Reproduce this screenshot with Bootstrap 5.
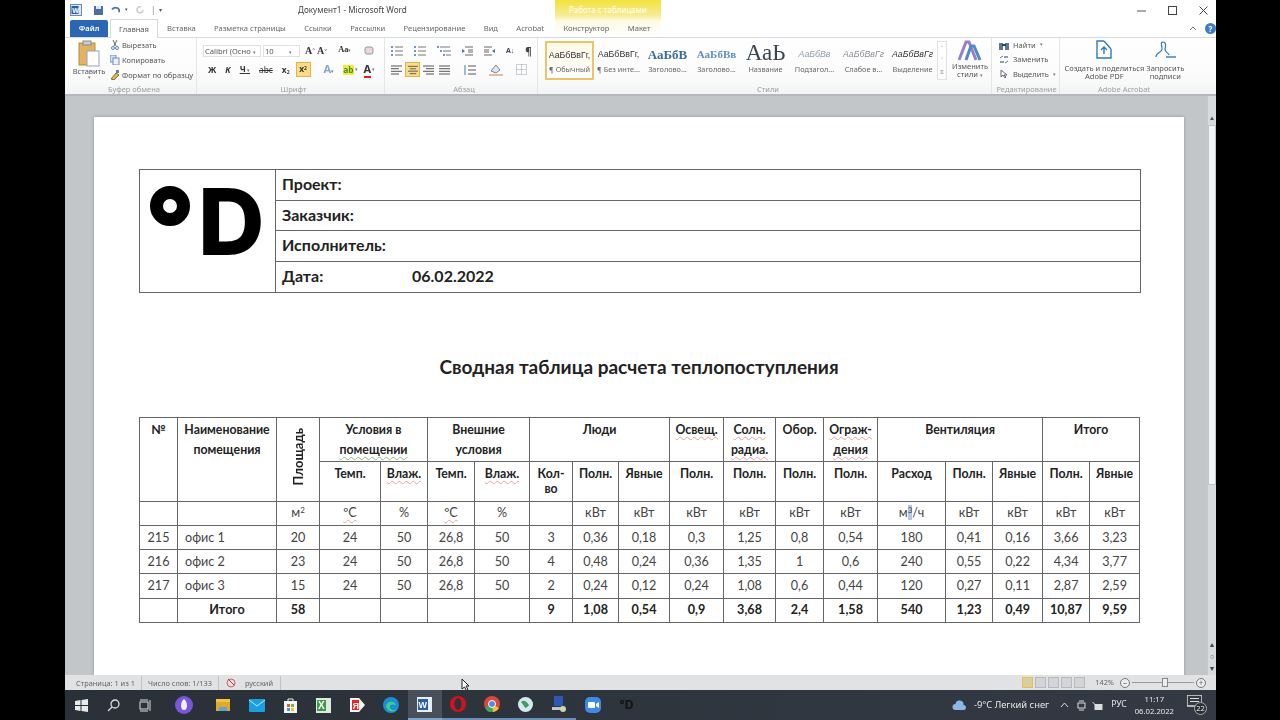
<!DOCTYPE html>
<html lang="ru"><head><meta charset="utf-8"><title>Документ1 - Microsoft Word</title>
<link href="https://cdn.jsdelivr.net/npm/bootstrap@5.3.0/dist/css/bootstrap.min.css" rel="stylesheet">
<style>
html,body{height:720px;overflow:hidden;background:#000;}
body{font-family:"Noto Sans","Liberation Sans",sans-serif;}
.win{margin-left:65px;width:1151px;height:720px;background:#fff;color:#555;font-size:8px;line-height:1.1;}
.ttl{height:20px;padding:0 5px;}
.ttl-left{width:228px;gap:4px;}
.ttl-name{font-size:8.15px;color:#444;}
.ctx{position:absolute;left:490px;top:0;width:106px;height:37px;background:linear-gradient(#f2e23e 0,#f6eb8e 40%,#fdfbe6 58%,#fff 100%);text-align:center;color:#fff;font-size:8px;padding-top:6px;}
.tabs{height:18px;padding-left:5px;font-size:7.6px;color:#666;border-bottom:1px solid #d6d9dd;}
.tb{padding:0 9.2px;line-height:17px;}
.tb-file{background:#2a66b4;color:#fff;width:38px;padding:0;text-align:center;font-weight:600;height:17px;border-radius:2px 2px 0 0;}
.tb-on{background:#fff;border:1px solid #d6d9dd;border-bottom:0;margin-top:-1px;height:19px;line-height:18px;color:#555;width:48px;text-align:center;padding:0;margin-left:2px;}
.rib{height:58px;background:linear-gradient(#fff,#fbfbfb 70%,#f2f3f4);border-bottom:2px solid #b4b7bb;font-size:7.5px;}
.grp{border-right:1px solid #e4e5e7;height:100%;padding-top:2px;flex:none;}
.grp-body{height:44px;}
.grp-lab{height:11px;line-height:11px;text-align:center;color:#9a9da1;font-size:7.5px;}
.g1{width:132px;padding-left:7px}.g2{width:188px;padding-left:6px}.g3{width:153px;padding-left:6px}.g4{width:454px;padding-left:7px}.g5{width:68px;padding-left:7px}.g6{width:125px;padding-left:3px;border-right:0}
.big{width:34px;text-align:center;white-space:nowrap;}
.clip-gap{gap:2px;white-space:nowrap;}
.col3{margin-top:-2px;height:44px;}
.rw2{padding-top:3px;}
.selbx{height:12px;border:1px solid #dfe1e4;background:#fff;line-height:10px;padding-left:1px;color:#555;font-size:7.6px;white-space:nowrap;}
.rw{height:15px;gap:5px;}
.ic{font-weight:700;color:#333;font-size:8.4px;line-height:14px;}
.ar{font-size:5px;color:#777;font-weight:400;}
.hl{background:#fbdc86;border:1px solid #e3b34c;width:15px;height:15px;text-align:center;line-height:12px;}
.sty{width:49px;height:39px;text-align:center;overflow:hidden;white-space:nowrap;color:#666;font-size:7.3px;margin-top:1px;}
.sty-on{border:2px solid #eec468;background:linear-gradient(#fff9e6,#fff);}
.smp{height:24px;line-height:27px;color:#333;font-size:8.8px;font-family:"Liberation Sans",sans-serif;}
.sty-on .smp{height:22px;line-height:25px;}
.scr{width:10px;height:39px;border:1px solid #dfe1e4;font-size:6px;text-align:center;line-height:12px;color:#777;margin-top:1px;}
.doc{height:579px;background:#c3c6c9;overflow:hidden;position:relative;padding:21px 32px 0 29px;}
.vsb{position:absolute;right:0;top:0;bottom:0;width:9px;background:#d8dadd;border-left:1px solid #c4c7cb;color:#444;font-size:6px;text-align:center;}
.vup{margin-top:19px;}
.thumb{height:360px;background:#f3f4f5;margin-top:3px;border:1px solid #c2c5c9;}
.vnav{position:absolute;left:0;right:0;bottom:0;line-height:12px;color:#444;font-size:7px;}
.pg{width:1090px;height:600px;background:#fff;padding:52px 44px 0 45px;box-shadow:0 0 3px #8b9098;color:#222;font-family:"Lato","Noto Sans",sans-serif;}
.hd,.tbl{border-collapse:collapse;table-layout:fixed;}
.hd{width:1002px;font-size:16px;font-weight:700;color:#222;}
.hd td{border:1px solid #666;height:30.7px;padding:0 6px 2px;}
.hd .lg{width:136px;padding:0;position:relative;}
.ring{position:absolute;left:10px;top:16px;width:40px;height:40px;border:13px solid #000;border-radius:50%;}
.dd{position:absolute;left:58px;top:6px;font:800 92px/92px Inter,sans-serif;color:#000;}
.tt{text-align:center;font-weight:700;font-size:19px;color:#222;height:30px;line-height:30px;margin:59px 0 35px;width:1000px;}
.tbl{width:1001px;font-size:12.6px;color:#444;text-align:center;}
.tbl td{border:1px solid #666;padding:0;height:24.2px;line-height:20px;vertical-align:middle;}
.tbl .h td{font-weight:700;color:#222;font-size:12.3px;vertical-align:top;padding-top:2px;}
.tbl .r1 td{height:44px}
.tbl .r2 td{height:40px;line-height:15px;padding-top:4px;}
.tbl .tot td{font-weight:700;color:#222;}
.tbl td.lf{text-align:left;padding-left:7px;}
.vert{writing-mode:vertical-rl;transform:rotate(180deg);display:inline-block;margin:0 auto;font-size:13px;}
.tbl .h td.vc{vertical-align:middle;padding:0;}
.rd{text-decoration:underline wavy #e2a39c 1px;text-underline-offset:2px;}
.gr{text-decoration:underline wavy #8fb887 1px;text-underline-offset:2px;}
.sel{background:#b4c9e4;}
.sup{font-size:8px;vertical-align:4px;line-height:0;}
.stat{height:15px;background:#e1e2e4;font-size:7.4px;color:#666;padding-left:5px;}
.st-i{padding:0 6px;border-right:1px solid #bfc2c6;line-height:14px;height:14px;}
.zm{width:11px;height:11px;background:#d2d4d7;border:1px solid #b7babd;}
.zm-on{background:#d8cfa0;border-color:#e9c14a;}
.slid{width:62px;height:1px;background:#999;position:relative;}
.knob{position:absolute;left:30px;top:-4px;width:6px;height:9px;background:#eceef0;border:1px solid #888;}
.rnd{width:10px;height:10px;border:1px solid #777;border-radius:50%;background:#eee;text-align:center;line-height:7px;font-size:8px;}
.task{height:30px;background:linear-gradient(90deg,#2a3038,#333a43);color:#e6e8ea;font-size:9.4px;}
.tkb{width:33.6px;height:30px;flex:none;}
.tkb-on{background:#4a5059;border-bottom:2px solid #7ea4cc;}
.under{border-bottom:2px solid #6c8fb5;}
.tm{font-size:7.7px;text-align:center;line-height:12px;margin-right:13px;}
.mouse{position:absolute;left:396px;top:678px;z-index:5;}
.tl{font-family:"Liberation Sans",sans-serif;font-weight:700;}
.rib,.tabs,.ttl,.stat,.task{filter:blur(.35px);}
</style></head><body>
<div class="win d-flex flex-column position-relative">
 <div class="ttl d-flex align-items-center">
  <div class="ttl-left d-flex align-items-center">
   <svg width="12" height="12" viewBox="0 0 12 12"><rect x=".5" y=".5" width="11" height="11" fill="#dce8f6" stroke="#6a8cb8"/><rect x="1.500" y="2" width="7" height="8" fill="#2b5fa8"/><text class="tl" x="2.200" y="8.700" font-size="7" fill="#fff">W</text></svg>
   <svg class="ms-2" width="9" height="9" viewBox="0 0 9 9"><rect width="9" height="9" fill="#4a6ea5"/><rect x="2" y="0" width="5" height="3" fill="#dfe7f2"/></svg>
   <svg class="ms-1" width="10" height="8" viewBox="0 0 11 9"><path d="M1 4c2-3 6-3 8 0v3" fill="none" stroke="#5078ad" stroke-width="2"/></svg>
   <span style="font-size:5px">▾</span>
   <svg class="ms-1" width="9" height="9" viewBox="0 0 9 9"><path d="M7 4a3 3 0 1 1-2-3" fill="none" stroke="#c5cad2" stroke-width="1.500"/></svg>
   <span style="color:#888;margin-left:2px">|</span><span style="font-size:6px">▾</span>
  </div>
  <span class="ttl-name">Документ1 - Microsoft Word</span>
  <div class="ms-auto d-flex align-items-center" style="gap:22px;padding-right:3px">
   <svg width="9" height="9" viewBox="0 0 9 9"><path d="M0 5h9" stroke="#555"/></svg>
   <svg width="9" height="9" viewBox="0 0 9 9"><rect x=".5" y=".5" width="8" height="8" fill="none" stroke="#444"/></svg>
   <svg width="9" height="9" viewBox="0 0 9 9"><path d="M.5.500l8 8M8.500.500l-8 8" stroke="#444"/></svg>
  </div>
 </div>
 <div class="ctx">Работа с таблицами</div>
 <div class="tabs d-flex position-relative">
  <div class="tb tb-file">Файл</div><div class="tb tb-on">Главная</div>
  <div class="tb" style="padding:0 9px">Вставка</div><div class="tb">Разметка страницы</div><div class="tb">Ссылки</div><div class="tb">Рассылки</div><div class="tb">Рецензирование</div><div class="tb">Вид</div><div class="tb">Acrobat</div>
  <div class="tb" style="margin-left:1px">Конструктор</div><div class="tb">Макет</div>
  <div class="ms-auto d-flex align-items-center gap-2">
   <svg width="8" height="7" viewBox="0 0 8 7"><path d="M1 5l3-3 3 3" fill="none" stroke="#777"/></svg>
   <span class="d-inline-block text-center text-white rounded-circle" style="width:11px;height:11px;background:#3f7cc7;line-height:11px;font-size:8px;font-weight:700">?</span>
  </div>
 </div>
 <div class="rib d-flex">
  <div class="grp g1">
   <div class="grp-body d-flex gap-1">
    <div class="big"><svg width="22" height="27" viewBox="0 0 22 27"><rect x="1" y="3" width="16" height="22" fill="#e1b463" stroke="#b68a3e"/><rect x="5" y="1" width="8" height="4" fill="#c9ced6" stroke="#888"/><rect x="9" y="11" width="12" height="15" fill="#fff" stroke="#9aa4b0"/></svg><div>Вставить</div><div class="ar">▾</div></div>
    <div class="d-flex flex-column justify-content-around col3">
     <div class="d-flex align-items-center clip-gap"><svg width="10" height="10" viewBox="0 0 10 10"><path d="M3 0l3 6M7 0L4 6" stroke="#667"/><circle cx="3" cy="8" r="1.500" fill="none" stroke="#5c7fb0"/><circle cx="7" cy="8" r="1.500" fill="none" stroke="#5c7fb0"/></svg>Вырезать</div>
     <div class="d-flex align-items-center clip-gap"><svg width="10" height="10" viewBox="0 0 10 10"><rect x="0" y="0" width="6" height="7" fill="#cfe0f2" stroke="#6b8fba"/><rect x="3" y="3" width="6" height="7" fill="#e9f1f9" stroke="#6b8fba"/></svg>Копировать</div>
     <div class="d-flex align-items-center clip-gap"><svg width="10" height="10" viewBox="0 0 10 10"><path d="M1 9l5-6 3 2-5 5z" fill="#e4b64e" stroke="#8a6a2a"/><rect x="6" y="0" width="3" height="3" fill="#6a7f99"/></svg>Формат по образцу</div>
    </div>
   </div>
   <div class="grp-lab">Буфер обмена</div>
  </div>
  <div class="grp g2">
   <div class="grp-body rw2">
    <div class="d-flex rw align-items-center"><div class="selbx" style="width:58px">Calibri (Осно <span class="ar">▾</span></div><div class="selbx" style="width:37px;margin-left:-3px">10 &nbsp; &nbsp; &nbsp; &nbsp;<span class="ar">▾</span></div><span class="ic" style="font-family:'Liberation Serif',serif;font-size:10px">A<sup style="font-size:5px">^</sup> A<sup style="font-size:5px">˅</sup></span><span class="ic" style="font-family:'Liberation Serif',serif;margin-left:6px">Aa<span class="ar">▾</span></span><svg class="ms-2" width="11" height="11" viewBox="0 0 11 11"><rect x="1" y="2" width="8" height="7" rx="2" fill="#f0d6da" stroke="#8a9bb0"/></svg></div>
    <div class="d-flex rw align-items-center mt-1" style="gap:9px;padding-left:5px"><span class="ic">Ж</span><span class="ic fst-italic">К</span><span class="ic text-decoration-underline">Ч<span class="ar"> ▾</span></span><span class="ic" style="text-decoration:line-through;font-weight:400">abc</span><span class="ic">x<sub style="font-size:5px">2</sub></span><span class="ic hl" style="margin-left:-3px">x<sup style="font-size:5px">2</sup></span><span class="ic ms-1" style="color:#7fa8d8;font-size:11px">A<span class="ar">▾</span></span><span class="ic" style="background:#f3ea3a;color:#4a8b3c;line-height:10px">ab</span><span class="ar" style="margin-left:-8px">▾</span><span class="ic" style="color:#333;font-size:11px;border-bottom:2px solid #d22;margin-left:-3px">A</span><span class="ar" style="margin-left:-8px">▾</span></div>
   </div>
   <div class="grp-lab">Шрифт</div>
  </div>
  <div class="grp g3">
   <div class="grp-body rw2">
    <div class="d-flex rw align-items-center" style="gap:11px">
     <svg width="12" height="10" viewBox="0 0 12 10"><path d="M4 1h8M4 5h8M4 9h8" stroke="#777"/><path d="M0 1h2M0 5h2M0 9h2" stroke="#3f74b5" stroke-width="1.500"/></svg>
     <svg width="12" height="10" viewBox="0 0 12 10"><path d="M4 1h8M4 5h8M4 9h8" stroke="#777"/><path d="M1 0v2M1 4v2M1 8v2" stroke="#3f74b5" stroke-width="1.500"/></svg>
     <svg width="14" height="10" viewBox="0 0 14 10"><path d="M3 1h10M6 5h8M9 9h5" stroke="#777"/><path d="M0 1h2M3 5h2M6 9h2" stroke="#3f74b5" stroke-width="1.500"/></svg>
     <svg width="11" height="10" viewBox="0 0 11 10"><path d="M3 1h8M6 4h5M6 6h5M3 9h8" stroke="#666"/><path d="M3 5L0 3v4z" fill="#3f74b5"/></svg>
     <svg width="11" height="10" viewBox="0 0 11 10"><path d="M0 1h8M0 4h5M0 6h5M0 9h8" stroke="#666"/><path d="M8 5l3-2v4z" fill="#3f74b5"/></svg>
     <span class="ic" style="font-size:7px;color:#446">А↓</span><span class="ic" style="font-size:10px;color:#444">¶</span>
    </div>
    <div class="d-flex rw align-items-center mt-1" style="gap:5px">
     <svg width="11" height="10" viewBox="0 0 11 10"><path d="M0 1h11M0 3.700h8M0 6.300h11M0 9h8" stroke="#555"/></svg>
     <span class="hl d-flex align-items-center justify-content-center" style="margin:0 -2px"><svg width="10" height="10" viewBox="0 0 11 10"><path d="M0 1h11M2 3.700h7M0 6.300h11M2 9h7" stroke="#555"/></svg></span>
     <svg width="11" height="10" viewBox="0 0 11 10"><path d="M0 1h11M3 3.700h8M0 6.300h11M3 9h8" stroke="#555"/></svg>
     <svg width="11" height="10" viewBox="0 0 11 10"><path d="M0 1h11M0 3.700h11M0 6.300h11M0 9h11" stroke="#555"/></svg>
     <svg class="ms-2" width="13" height="10" viewBox="0 0 13 10"><path d="M5 1h8M5 5h8M5 9h8" stroke="#555"/><path d="M2 0v10" stroke="#3f74b5"/></svg>
     <svg class="ms-2" width="14" height="12" viewBox="0 0 14 12"><path d="M2 7l5-6 4 5-4 3z" fill="#dfe6ee" stroke="#7789a0"/><rect y="10" width="14" height="2" fill="#e7b9a0"/></svg>
     <svg class="ms-2" width="11" height="11" viewBox="0 0 11 11"><path d="M.5.500h10v10H.5zM5.500.500v10M.5 5.500h10" fill="none" stroke="#9aa3ad" stroke-dasharray="1 1"/></svg>
    </div>
   </div>
   <div class="grp-lab">Абзац</div>
  </div>
  <div class="grp g4">
   <div class="grp-body d-flex align-items-start">
    <div class="sty sty-on"><div class="smp">АаБбВвГг,</div>¶ Обычный</div>
    <div class="sty"><div class="smp">АаБбВвГг,</div>¶ Без инте...</div>
    <div class="sty"><div class="smp" style="font:700 13px/27px 'Liberation Serif',serif;color:#3d6a9c">АаБбВ</div>Заголово...</div>
    <div class="sty"><div class="smp" style="font:700 11px/27px 'Liberation Serif',serif;color:#5f8fbd">АаБбВв</div>Заголово...</div>
    <div class="sty"><div class="smp" style="font:23px/24px 'Liberation Serif',serif;color:#3a4654">АаЬ</div>Название</div>
    <div class="sty"><div class="smp" style="font-style:italic;color:#8e9cab">АаБбВв</div>Подзагол...</div>
    <div class="sty"><div class="smp" style="font-style:italic;color:#8a8f96">АаБбВвГг</div>Слабое в...</div>
    <div class="sty"><div class="smp" style="font-style:italic">АаБбВвГг</div>Выделение</div>
    <div class="scr">˄<br>˅<br>≡</div>
    <div class="text-center ms-1" style="width:38px"><svg width="24" height="22" viewBox="0 0 24 22"><path d="M1 20L8 2h3l7 18" fill="none" stroke="#9a7ec9" stroke-width="3"/><path d="M8 20L13 6h3l6 14" fill="none" stroke="#4d8bc4" stroke-width="3"/></svg><div>Изменить</div><div>стили <span class="ar">▾</span></div></div>
   </div>
   <div class="grp-lab">Стили</div>
  </div>
  <div class="grp g5">
   <div class="grp-body d-flex flex-column justify-content-around col3">
    <div class="d-flex align-items-center gap-1"><svg width="10" height="9" viewBox="0 0 10 9"><rect y="2" width="4" height="7" fill="#5e7898"/><rect x="6" y="2" width="4" height="7" fill="#5e7898"/><rect x="3" y="3" width="4" height="2" fill="#345"/></svg>Найти <span class="ar">▾</span></div>
    <div class="d-flex align-items-center gap-1"><svg width="10" height="9" viewBox="0 0 10 9"><path d="M1 3l3-2M9 6L6 8" stroke="#66788c"/><rect x="5" y="1" width="4" height="2" fill="#8a9db3"/><rect x="1" y="6" width="4" height="2" fill="#8a9db3"/></svg>Заменить</div>
    <div class="d-flex align-items-center gap-1"><svg width="10" height="10" viewBox="0 0 10 10"><path d="M2 1v7l2-2 2 3 1-1-2-2h3z" fill="#fff" stroke="#667"/></svg>Выделить <span class="ar">▾</span></div>
   </div>
   <div class="grp-lab" style="margin-left:-5px;margin-top:2px;white-space:nowrap">Редактирование</div>
  </div>
  <div class="grp g6">
   <div class="grp-body d-flex">
    <div class="text-center" style="width:84px"><svg width="18" height="20" viewBox="0 0 18 20"><path d="M9 1H2v17h14V9M9 1l7 8M9 14V7M6 10l3-3 3 3" fill="none" stroke="#2f7ab8" stroke-width="1.400"/></svg><div style="margin-top:4px;white-space:nowrap">Создать и поделиться</div><div>Adobe PDF</div></div>
    <div class="text-center" style="width:40px"><svg width="24" height="20" viewBox="0 0 24 20"><path d="M3 17c0-5 6-4 6-8s-2-7 1-7 3 4 2 7c0 4 3 3 4 6" fill="none" stroke="#2f7ab8" stroke-width="1.200"/><path d="M13 17h10" stroke="#2f7ab8" stroke-width="1.400"/></svg><div style="margin-top:4px;white-space:nowrap">Запросить</div><div>подписи</div></div>
   </div>
   <div class="grp-lab">Adobe Acrobat</div>
  </div>
 </div>
 <div class="doc">
  <div class="pg">
   <table class="hd">
    <tr><td class="lg" rowspan="4"><span class="ring"></span><span class="dd">D</span></td><td>Проект:</td></tr>
    <tr><td>Заказчик:</td></tr>
    <tr><td>Исполнитель:</td></tr>
    <tr><td><span class="d-inline-block" style="width:130px">Дата:</span>06.02.2022</td></tr>
   </table>
   <div class="tt">Сводная таблица расчета теплопоступления</div>
   <table class="tbl">
    <colgroup><col style="width:38px"><col style="width:99px"><col style="width:43px"><col style="width:61px"><col style="width:47px"><col style="width:47px"><col style="width:55px"><col style="width:43px"><col style="width:46px"><col style="width:51px"><col style="width:54px"><col style="width:52px"><col style="width:48px"><col style="width:54px"><col style="width:68px"><col style="width:47px"><col style="width:50px"><col style="width:47px"><col style="width:50px"></colgroup>
    <tr class="h r1"><td rowspan="2">№</td><td rowspan="2">Наименование помещения</td><td rowspan="2" class="vc"><span class="vert">Площадь</span></td><td colspan="2">Условия в <span class="gr">помещении</span></td><td colspan="2">Внешние<br>условия</td><td colspan="3">Люди</td><td><span class="rd">Освещ.</span></td><td><span class="rd">Солн.</span> <span class="rd">радиа.</span></td><td>Обор.</td><td><span class="rd">Ограж-дения</span></td><td colspan="3">Вентиляция</td><td colspan="2">Итого</td></tr>
    <tr class="h r2"><td>Темп.</td><td><span class="rd">Влаж.</span></td><td>Темп.</td><td><span class="rd">Влаж.</span></td><td>Кол-<br>во</td><td>Полн.</td><td>Явные</td><td>Полн.</td><td>Полн.</td><td>Полн.</td><td>Полн.</td><td>Расход</td><td>Полн.</td><td>Явные</td><td>Полн.</td><td>Явные</td></tr>
    <tr><td></td><td></td><td>м<span class="sup">2</span></td><td><span class="rd">ºС</span></td><td>%</td><td><span class="rd">ºС</span></td><td>%</td><td></td><td>кВт</td><td>кВт</td><td>кВт</td><td>кВт</td><td>кВт</td><td>кВт</td><td>м<span class="sel"><span class="sup">3</span></span>/ч</td><td>кВт</td><td>кВт</td><td>кВт</td><td>кВт</td></tr>
    <tr><td>215</td><td class="lf">офис 1</td><td>20</td><td>24</td><td>50</td><td>26,8</td><td>50</td><td>3</td><td>0,36</td><td>0,18</td><td>0,3</td><td>1,25</td><td>0,8</td><td>0,54</td><td>180</td><td>0,41</td><td>0,16</td><td>3,66</td><td>3,23</td></tr>
    <tr><td>216</td><td class="lf">офис 2</td><td>23</td><td>24</td><td>50</td><td>26,8</td><td>50</td><td>4</td><td>0,48</td><td>0,24</td><td>0,36</td><td>1,35</td><td>1</td><td>0,6</td><td>240</td><td>0,55</td><td>0,22</td><td>4,34</td><td>3,77</td></tr>
    <tr><td>217</td><td class="lf">офис 3</td><td>15</td><td>24</td><td>50</td><td>26,8</td><td>50</td><td>2</td><td>0,24</td><td>0,12</td><td>0,24</td><td>1,08</td><td>0,6</td><td>0,44</td><td>120</td><td>0,27</td><td>0,11</td><td>2,87</td><td>2,59</td></tr>
    <tr class="tot"><td></td><td>Итого</td><td>58</td><td></td><td></td><td></td><td></td><td>9</td><td>1,08</td><td>0,54</td><td>0,9</td><td>3,68</td><td>2,4</td><td>1,58</td><td>540</td><td>1,23</td><td>0,49</td><td>10,87</td><td>9,59</td></tr>
   </table>
  </div>
  <div class="vsb"><div class="vup">▲</div><div class="thumb"></div><div class="vnav">▲<br>○<br>▼</div></div>
 </div>
 <div class="stat d-flex align-items-center">
  <div class="st-i">Страница: 1 из 1</div><div class="st-i">Число слов: 1/133</div>
  <div class="st-i d-flex align-items-center gap-2" style="padding-right:7px"><svg width="12" height="11" viewBox="0 0 12 11"><circle cx="6" cy="6" r="4" fill="none" stroke="#c66"/><path d="M3 2l6 6" stroke="#c33"/></svg>русский</div>
  <div class="ms-auto d-flex align-items-center" style="gap:2px;padding-right:10px">
   <span class="zm zm-on"></span><span class="zm"></span><span class="zm"></span><span class="zm"></span><span class="zm"></span>
   <span class="ms-2 me-1">142%</span><span class="rnd">–</span><span class="slid"><span class="knob"></span></span><span class="rnd">+</span>
  </div>
 </div>
 <div class="task d-flex align-items-center">
  <div class="tkb d-flex align-items-center justify-content-center"><svg width="13" height="13" viewBox="0 0 13 13"><path d="M0 2l5.500-1v5H0zM6.500 1L13 0v6H6.500zM0 7h5.500v5L0 11zM6.500 7H13v6l-6.500-1z" fill="#e8eaec"/></svg></div>
  <div class="tkb d-flex align-items-center justify-content-center" style="margin-left:-2px"><svg width="13" height="13" viewBox="0 0 13 13"><circle cx="8" cy="5" r="4" fill="none" stroke="#ddd" stroke-width="1.300"/><path d="M5 8l-4 4" stroke="#ddd" stroke-width="1.300"/></svg></div>
  <div class="tkb d-flex align-items-center justify-content-center" style="margin-left:-1px"><svg width="13" height="13" viewBox="0 0 13 13"><rect x="1" y="3" width="8" height="7" fill="none" stroke="#ddd"/><path d="M1 1h8M1 12h8M11 1v11" stroke="#ddd"/></svg></div>
  <div class="tkb d-flex align-items-center justify-content-center ms-1"><svg width="18" height="18"><circle cx="9" cy="9" r="9" fill="#7a57d8"/><path d="M9 3c4 3 4 11 0 11s-4-8 0-11z" fill="#f2eefb"/></svg></div>
  <div class="tkb d-flex align-items-center justify-content-center" style="margin-left:6px"><svg width="14" height="14"><rect width="14" height="4" y="1" fill="#f3c53e"/><rect width="14" height="9" y="4" fill="#e0a92e"/><rect x="3" y="9" width="8" height="4" fill="#5aa7d6"/></svg></div>
  <div class="tkb d-flex align-items-center justify-content-center"><svg width="16" height="13"><rect width="16" height="13" rx="1" fill="#1c9fe0"/><path d="M0 1l8 6 8-6" fill="none" stroke="#bfe8fa"/></svg></div>
  <div class="tkb d-flex align-items-center justify-content-center"><svg width="13" height="15"><rect y="3" width="13" height="12" fill="#f4f4f4"/><rect x="3" y="6" width="3" height="3" fill="#e25a3a"/><rect x="7" y="6" width="3" height="3" fill="#7fb43a"/><rect x="3" y="10" width="3" height="3" fill="#3a9ad9"/><rect x="7" y="10" width="3" height="3" fill="#f2c12e"/><path d="M4 3V1h5v2" fill="none" stroke="#eee"/></svg></div>
  <div class="tkb d-flex align-items-center justify-content-center"><svg width="15" height="15"><rect width="15" height="15" fill="#dfe9dd"/><rect x="1" y="2" width="9" height="11" fill="#3d9b4a"/><text class="tl" x="2" y="11" font-size="10" fill="#fff">X</text></svg></div>
  <div class="tkb d-flex align-items-center justify-content-center"><svg width="15" height="16"><path d="M0 1h9l6 7-6 7H0z" fill="#f4f4f4"/><rect x="2" y="3" width="7" height="10" fill="#e22"/><text class="tl" x="2.500" y="11.500" font-size="9" fill="#fff">Я</text></svg></div>
  <div class="tkb d-flex align-items-center justify-content-center"><svg width="16" height="16"><circle cx="8" cy="8" r="8" fill="#1b8fd6"/><path d="M3 9c1-5 8-6 10-1-3-1-7-1-6 3 1 2 4 3 7 1-3 4-10 3-11-3z" fill="#3fd08f"/></svg></div>
  <div class="tkb tkb-on d-flex align-items-center justify-content-center"><svg width="15" height="15"><rect width="15" height="15" fill="#e8eef6"/><rect x="1" y="2" width="10" height="11" fill="#2b5fa8"/><text class="tl" x="1.500" y="11" font-size="9" fill="#fff">W</text></svg></div>
  <div class="tkb under d-flex align-items-center justify-content-center"><svg width="16" height="16"><ellipse cx="8" cy="8" rx="8" ry="8" fill="#d3121c"/><ellipse cx="8" cy="8" rx="3.500" ry="6" fill="#2d333b"/></svg></div>
  <div class="tkb under d-flex align-items-center justify-content-center"><svg width="16" height="16"><circle cx="8" cy="8" r="8" fill="#e0453a"/><path d="M8 8L1 12a8 8 0 0 0 9 4z" fill="#3aa757"/><path d="M8 8l7 4a8 8 0 0 1-6 4z" fill="#f5c02e"/><circle cx="8" cy="8" r="3.500" fill="#4a8ce8" stroke="#fff"/></svg></div>
  <div class="tkb under d-flex align-items-center justify-content-center"><svg width="15" height="15"><circle cx="7.500" cy="7.500" r="7.500" fill="#d8e9ee"/><path d="M3 5c3-3 6 0 8 3-2 3-4 4-5 1z" fill="#3f9e62"/></svg></div>
  <div class="tkb under d-flex align-items-center justify-content-center"><svg width="15" height="17"><rect x="2" width="9" height="10" fill="#2d58b8"/><rect x="0" y="11" width="10" height="3" fill="#bfc6d0"/><circle cx="11" cy="13" r="3" fill="#cfd6a8"/></svg></div>
  <div class="tkb d-flex align-items-center justify-content-center"><svg width="16" height="16"><rect width="16" height="16" rx="5" fill="#3f8ae8"/><rect x="3" y="5" width="7" height="6" rx="1" fill="#fff"/><path d="M11 7l3-2v6l-3-2z" fill="#fff"/></svg></div>
  <div class="tkb d-flex align-items-center justify-content-center fw-bold" style="font-size:12px;color:#111;font-family:Inter,sans-serif">°D</div>
  <div class="ms-auto d-flex align-items-center h-100">
   <svg width="15" height="11" viewBox="0 0 14 11" style="margin-right:7px"><path d="M3 10a3 3 0 0 1 0-6 4 4 0 0 1 8 1 2.500 2.500 0 0 1 0 5z" fill="#8db8e6"/></svg>
   <span style="margin-right:11px">-9°C Легкий снег</span>
   <svg width="9" height="6" viewBox="0 0 9 6" style="margin-right:8px"><path d="M1 5l3.500-4L8 5" fill="none" stroke="#ddd"/></svg>
   <svg width="9" height="11" viewBox="0 0 9 11" style="margin-right:6px"><rect x="1" y="3" width="7" height="5" fill="none" stroke="#ddd"/><path d="M2 1h5M2 10h5" stroke="#ddd"/></svg>
   <svg width="11" height="9" viewBox="0 0 10 9" style="margin-right:8px"><rect x="2" y="3" width="8" height="6" fill="#ddd"/><path d="M0 1l3 3" stroke="#ddd"/></svg>
   <span style="margin-right:8px;font-size:8.600px">РУС</span>
   <div class="tm">11:17<br>06.02.2022</div>
   <div class="position-relative" style="width:20px;height:20px;margin-right:9px"><svg width="15" height="13" viewBox="0 0 15 13"><rect width="15" height="11" fill="none" stroke="#ddd" stroke-width="1.500"/><path d="M3 3.500h9M3 6.500h9" stroke="#ddd"/></svg><span class="position-absolute text-center rounded-circle" style="right:0;bottom:0;width:13px;height:13px;background:#2b3037;border:1px solid #aaa;font-size:7.500px;line-height:11px">22</span></div>
  </div>
 </div>
 <svg class="mouse" width="9" height="13" viewBox="0 0 9 13"><path d="M1 1v10l2.500-2 2 3.500 1.500-1-2-3.500h3z" fill="#fff" stroke="#222"/></svg>
</div>
</body></html>
